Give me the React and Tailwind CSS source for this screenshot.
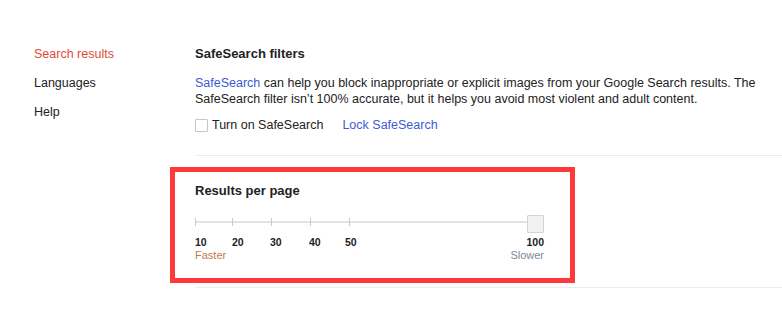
import React from "react";

const ticks = [0, 37, 76, 115, 154];

function ResultsSlider() {
  return (
    <div className="relative mt-[15px] h-[19px] w-[349px]">
      <svg width="345" height="19" className="block">
        <rect x="0" y="7" width="345" height="2" fill="#e3e3e3" />
        {ticks.map((t) => (
          <rect key={t} x={t} y="4" width="1" height="8" fill="#c9c9c9" />
        ))}
      </svg>
      {/* thumb sits over the track */}
      <div className="absolute right-0 top-[1px] h-[18px] w-[17px] rounded-[1px] border border-[#d3d3d3] bg-[#f2f2f2]" />
    </div>
  );
}

export default function App() {
  return (
    <div className="flex h-[316px] w-[782px] bg-white font-['Liberation_Sans',Arial,sans-serif] text-[12.5px] leading-4 text-[#222]">
      {/* left nav */}
      <div className="flex w-[195px] flex-col gap-[13px] pl-[34px] pt-[46px]">
        <div className="text-[#dd4b39]">Search results</div>
        <div>Languages</div>
        <div>Help</div>
      </div>

      <div className="flex-1">
        {/* SafeSearch */}
        <div className="border-b border-[#ebebeb] pb-[22px] pt-[46px]">
          <div className="text-[13px] font-bold">SafeSearch filters</div>
          <p className="mt-[13px]">
            <span className="text-[#3b5bd6]">SafeSearch</span> can help you block inappropriate or explicit images from your Google Search results. The SafeSearch filter isn’t 100% accurate, but it helps you avoid most violent and adult content.
          </p>
          <div className="mt-[10px] flex h-4 items-center">
            <div className="h-[13px] w-[13px] rounded-[1px] border border-[#c6c6c6]" />
            <span className="ml-[4px]">Turn on SafeSearch</span>
            <span className="ml-[19px] text-[#3b5bd6]">Lock SafeSearch</span>
          </div>
        </div>

        {/* Results per page */}
        <div className="border-b border-[#ebebeb] pb-[4px]">
          <div className="ml-[-25px] mt-[11px] w-[405px] border-[5px] border-[#fc3a3a] pb-[16px] pl-[20px] pt-[11px]">
            <div className="text-[13px] font-bold">Results per page</div>
            <ResultsSlider />
            <div className="mt-[3px] flex w-[349px] text-[10.5px] font-bold leading-3">
              <span className="w-[37px]">10</span>
              <span className="w-[38px]">20</span>
              <span className="w-[39px]">30</span>
              <span className="w-[36px]">40</span>
              <span>50</span>
              <span className="ml-auto">100</span>
            </div>
            <div className="mt-[1px] flex w-[349px] text-[11px] leading-[13px]">
              <span className="text-[#c07a50]">Faster</span>
              <span className="ml-auto text-[#7b8a98]">Slower</span>
            </div>
          </div>
        </div>
      </div>
    </div>
  );
}
